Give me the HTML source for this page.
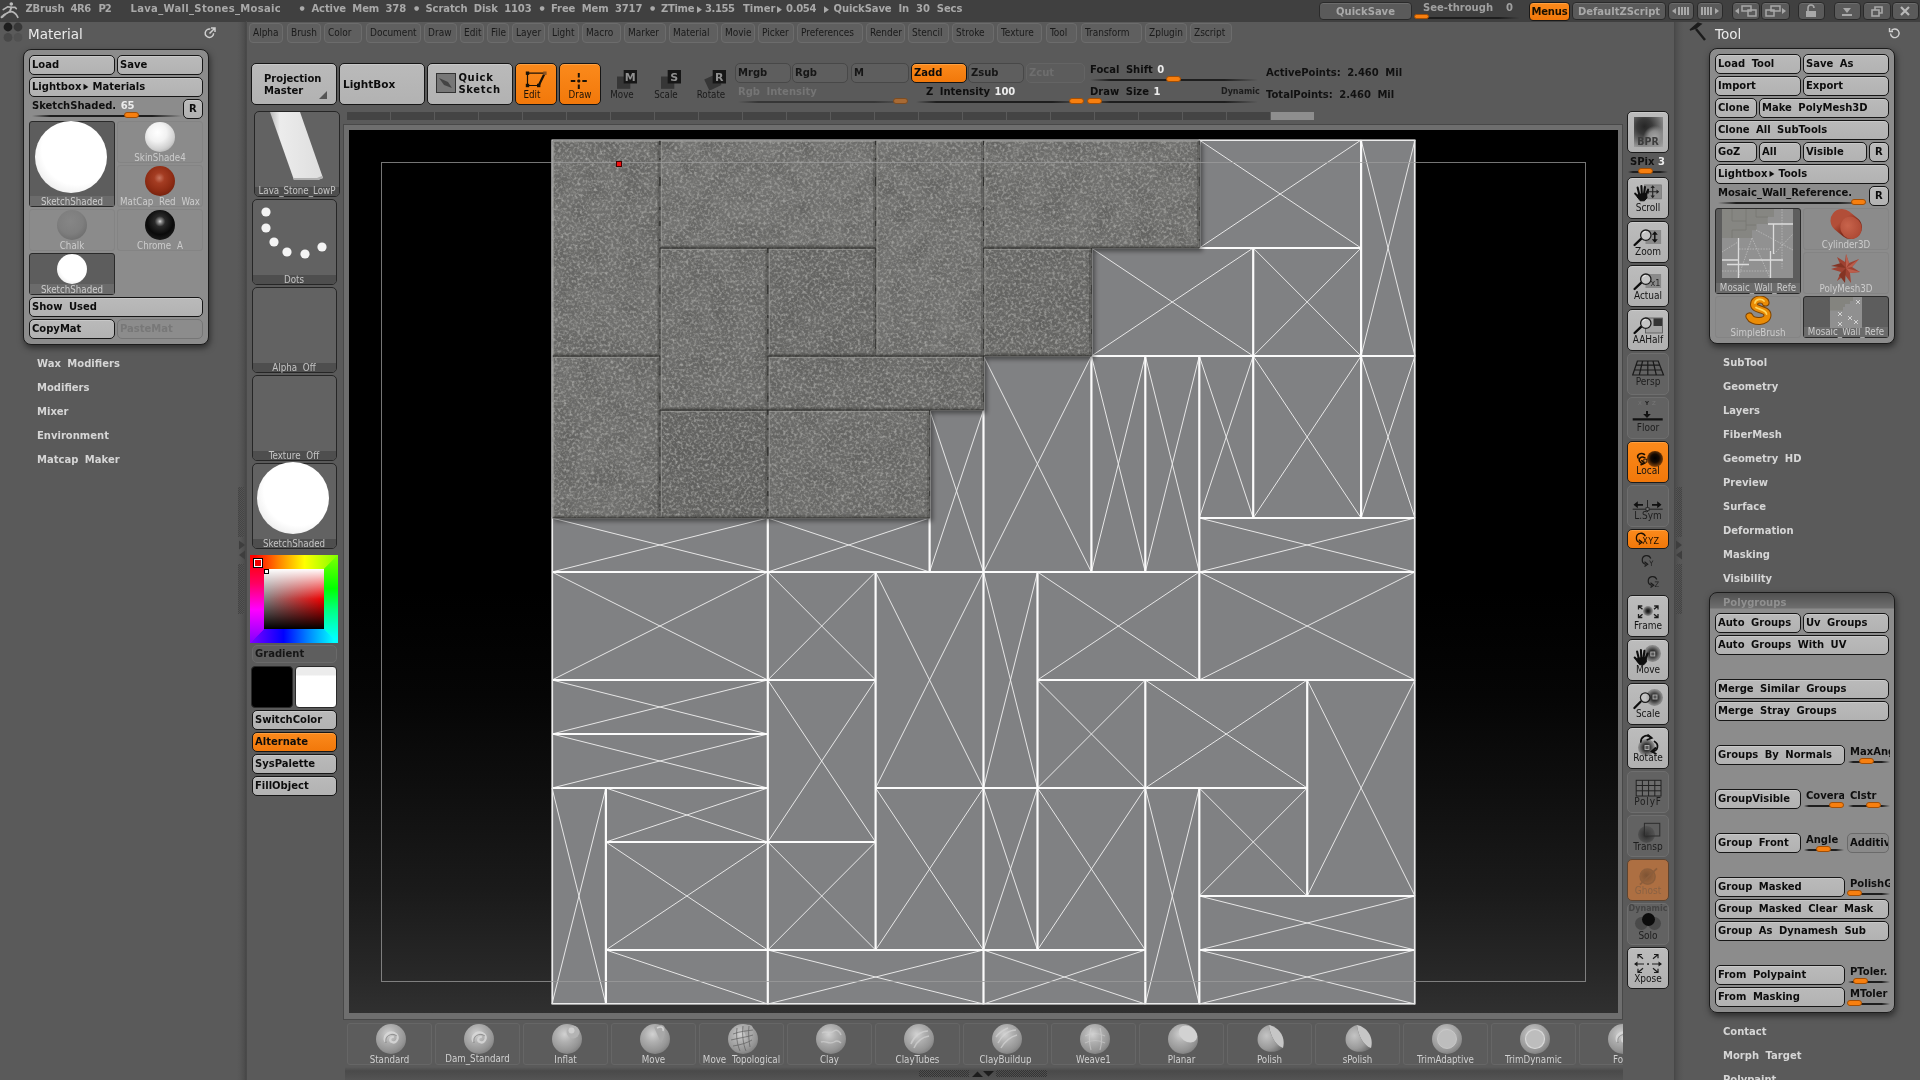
<!DOCTYPE html><html><head><meta charset="utf-8"><title>ZBrush</title><style>
*{box-sizing:border-box;margin:0;padding:0}
html,body{width:1920px;height:1080px;overflow:hidden;background:#5a5a5a}
body{position:relative;opacity:.999;font-family:"DejaVu Sans","Liberation Sans",sans-serif;font-size:10px;color:#111}
.a{position:absolute}
.bt{position:absolute;height:20px;line-height:17px;border:1px solid #161616;border-radius:5px;background:linear-gradient(#bababa,#b2b2b2);font-weight:bold;font-size:10px;padding-left:2px;word-spacing:3px;white-space:nowrap;overflow:hidden;color:#0c0c0c;box-shadow:inset 0 1px 0 #c8c8c8}
.bo{background:linear-gradient(#fb8a1c,#f2780a);box-shadow:inset 0 1px 0 #ffa040}
.bf{background:#5e5e5e;border-color:#484848;box-shadow:none;color:#161616}
.bd{background:#8c8c8c;border-color:#767676;box-shadow:none;color:#787878}
.pn{position:absolute;background:#8c8c8c;border:1px solid #1c1c1c;border-radius:8px;box-shadow:1px 3px 6px rgba(0,0,0,.5)}
.sub{position:absolute;font-weight:bold;font-size:10px;color:#d6d6d6;word-spacing:3px;white-space:nowrap;line-height:12px}
.tb{position:absolute;font-weight:bold;font-size:10px;color:#a9a9a9;word-spacing:3px;white-space:nowrap;line-height:14px;top:2px}
.mn{position:absolute;top:23px;height:20px;line-height:18px;border:1px solid #6c6c6c;border-radius:4px;background:#5f5f5f;font-family:"DejaVu Sans Condensed","Liberation Sans",sans-serif;font-size:10px;color:#1a1a1a;padding-left:3px;white-space:nowrap;overflow:hidden}
.th{position:absolute;background:#5d5d5d;border:1px solid #2a2a2a;border-radius:3px}
.thf{position:absolute;background:#8b8b8b;border:1px solid #848484;border-radius:3px}
.lb{position:absolute;left:0;right:0;bottom:-4px;height:17px;line-height:17px;overflow:hidden;clip-path:inset(0 0 3px 0);text-align:center;font-family:"DejaVu Sans Condensed","Liberation Sans",sans-serif;font-size:9.7px;color:#cccccc;white-space:nowrap;word-spacing:3px}
.sp{position:absolute;border-radius:50%}
.sl{position:absolute;height:1.5px;background:linear-gradient(90deg,rgba(30,30,30,0),#1e1e1e 12%,#1e1e1e 80%,rgba(30,30,30,0))}
.kn{position:absolute;height:6px;width:15px;border-radius:3px;background:#f77f0f;border:1px solid #a34f05}
.st{position:absolute;font-weight:bold;font-size:10px;color:#0e0e0e;word-spacing:3px;white-space:nowrap;line-height:14px}
.st b{color:#ececec;margin-left:-2px}
.ib{position:absolute;left:1627px;width:42px;height:42px;border:1px solid #1c1c1c;border-radius:5px;background:linear-gradient(#bcbcbc,#b0b0b0);box-shadow:inset 0 1px 0 #cacaca;overflow:hidden}
.ib.bo{background:linear-gradient(#fb8a1c,#f2780a);box-shadow:inset 0 1px 0 #ffa040}
.ibf{background:#626262;border-color:#6e6e6e;box-shadow:none}
.ib .lb,.ibf .lb{color:#141414;bottom:1px;font-size:10px}
.ibf .lb{color:#1d1d1d}
.br{position:absolute;top:1022px;width:85px;height:42px;border:1px solid #666;border-radius:3px;background:#5c5c5c}
.br .lb{bottom:-4px;color:#d0d0d0}
</style></head><body>
<div class="a" style="left:0;top:0;width:1920px;height:21.5px;background:#404040"></div>
<svg class="a" style="left:0;top:0" width="24" height="22" viewBox="0 0 24 22"><circle cx="11.300" cy="4" r="1.800" fill="#bcbcbc"/><g stroke="#b8b8b8" fill="none" stroke-linecap="round" stroke-linejoin="round"><path d="M3.200 9.600L7.600 6.800L11.500 7.400L14.800 7.200L16.300 8.600" stroke-width="1.600"/><path d="M11.300 7.400L9.900 11.600" stroke-width="1.800"/><path d="M9.900 11.600C7 13 4 15 1.500 17.300" stroke-width="1.700"/><path d="M9.900 11.800C13 11.300 16.600 13.500 17.800 17.300" stroke-width="1.700"/><ellipse cx="3.300" cy="15.800" rx="2.600" ry="1" transform="rotate(-38 3.300 15.800)" stroke-width=".8"/></g></svg>
<div class="tb" style="left:25.5px;letter-spacing:-.2px">ZBrush</div>
<div class="tb" style="left:70.5px;letter-spacing:-.5px">4R6</div>
<div class="tb" style="left:98.5px;letter-spacing:-1px">P2</div>
<div class="tb" style="left:130.5px;letter-spacing:.32px">Lava_Wall_Stones_Mosaic</div>
<div class="tb" style="left:299.59999999999997px;font-size:6px;line-height:14px;top:1px">&#9679;</div>
<div class="tb" style="left:414.0px;font-size:6px;line-height:14px;top:1px">&#9679;</div>
<div class="tb" style="left:539.6px;font-size:6px;line-height:14px;top:1px">&#9679;</div>
<div class="tb" style="left:649.9px;font-size:6px;line-height:14px;top:1px">&#9679;</div>
<div class="tb" style="left:311.5px;letter-spacing:-.12px">Active Mem 378</div>
<div class="tb" style="left:425.5px;letter-spacing:-.1px">Scratch Disk 1103</div>
<div class="tb" style="left:551px;letter-spacing:-.1px">Free Mem 3717</div>
<div class="tb" style="left:661px;letter-spacing:-.3px">ZTime</div>
<div class="tb" style="left:705px;letter-spacing:-.4px">3.155</div>
<div class="tb" style="left:743px;">Timer</div>
<div class="tb" style="left:786px;letter-spacing:-.3px">0.054</div>
<div class="tb" style="left:833.5px;letter-spacing:-.1px;word-spacing:3.6px">QuickSave In 30 Secs</div>
<div class="tb" style="left:696.6px;font-size:9px;line-height:14px;top:1.5px;transform:scaleX(.72);transform-origin:0 0">&#9654;</div>
<div class="tb" style="left:777.4px;font-size:9px;line-height:14px;top:1.5px;transform:scaleX(.72);transform-origin:0 0">&#9654;</div>
<div class="tb" style="left:824.3px;font-size:9px;line-height:14px;top:1.5px;transform:scaleX(.72);transform-origin:0 0">&#9654;</div>
<div class="a" style="left:1319px;top:2px;width:93px;height:18px;border:1px solid #2a2a2a;border-radius:4px;background:#5a5a5a;box-shadow:inset 0 1px 0 #6c6c6c;font-weight:bold;font-size:10px;line-height:17px;text-align:center;color:#a8a8a8;white-space:nowrap;overflow:hidden;">QuickSave</div>
<div class="tb" style="left:1423px;color:#a0a0a0;top:1px">See-through&nbsp; 0</div>
<div class="sl" style="left:1414px;top:17px;width:106px"></div><div class="kn" style="left:1414px;top:14px;height:5px"></div>
<div class="a" style="left:1529px;top:2px;width:41px;height:18px;border:1px solid #2a2a2a;border-radius:4px;background:#5a5a5a;box-shadow:inset 0 1px 0 #6c6c6c;font-weight:bold;font-size:10px;line-height:17px;text-align:center;color:#a8a8a8;white-space:nowrap;overflow:hidden;height:19px;font-size:10px;letter-spacing:-.2px;background:linear-gradient(#fb8a1c,#f2780a);color:#1a1000;box-shadow:inset 0 1px 0 #ffa040;border-color:#1a1a1a">Menus</div>
<div class="a" style="left:1572px;top:2px;width:94px;height:18px;border:1px solid #2a2a2a;border-radius:4px;background:#5a5a5a;box-shadow:inset 0 1px 0 #6c6c6c;font-weight:bold;font-size:10px;line-height:17px;text-align:center;color:#a8a8a8;white-space:nowrap;overflow:hidden;">DefaultZScript</div>
<div class="a" style="left:1668px;top:2px;width:26px;height:18px;border:1px solid #2a2a2a;border-radius:4px;background:#5a5a5a;box-shadow:inset 0 1px 0 #6c6c6c;font-weight:bold;font-size:10px;line-height:17px;text-align:center;color:#a8a8a8;white-space:nowrap;overflow:hidden;"></div>
<div class="a" style="left:1697px;top:2px;width:26px;height:18px;border:1px solid #2a2a2a;border-radius:4px;background:#5a5a5a;box-shadow:inset 0 1px 0 #6c6c6c;font-weight:bold;font-size:10px;line-height:17px;text-align:center;color:#a8a8a8;white-space:nowrap;overflow:hidden;"></div>
<div class="a" style="left:1732px;top:2px;width:28px;height:18px;border:1px solid #2a2a2a;border-radius:4px;background:#5a5a5a;box-shadow:inset 0 1px 0 #6c6c6c;font-weight:bold;font-size:10px;line-height:17px;text-align:center;color:#a8a8a8;white-space:nowrap;overflow:hidden;"></div>
<div class="a" style="left:1761px;top:2px;width:29px;height:18px;border:1px solid #2a2a2a;border-radius:4px;background:#5a5a5a;box-shadow:inset 0 1px 0 #6c6c6c;font-weight:bold;font-size:10px;line-height:17px;text-align:center;color:#a8a8a8;white-space:nowrap;overflow:hidden;"></div>
<div class="a" style="left:1798px;top:2px;width:27px;height:18px;border:1px solid #2a2a2a;border-radius:4px;background:#5a5a5a;box-shadow:inset 0 1px 0 #6c6c6c;font-weight:bold;font-size:10px;line-height:17px;text-align:center;color:#a8a8a8;white-space:nowrap;overflow:hidden;"></div>
<div class="a" style="left:1834px;top:2px;width:27px;height:18px;border:1px solid #2a2a2a;border-radius:4px;background:#5a5a5a;box-shadow:inset 0 1px 0 #6c6c6c;font-weight:bold;font-size:10px;line-height:17px;text-align:center;color:#a8a8a8;white-space:nowrap;overflow:hidden;"></div>
<div class="a" style="left:1863px;top:2px;width:28px;height:18px;border:1px solid #2a2a2a;border-radius:4px;background:#5a5a5a;box-shadow:inset 0 1px 0 #6c6c6c;font-weight:bold;font-size:10px;line-height:17px;text-align:center;color:#a8a8a8;white-space:nowrap;overflow:hidden;"></div>
<div class="a" style="left:1892px;top:2px;width:27px;height:18px;border:1px solid #2a2a2a;border-radius:4px;background:#5a5a5a;box-shadow:inset 0 1px 0 #6c6c6c;font-weight:bold;font-size:10px;line-height:17px;text-align:center;color:#a8a8a8;white-space:nowrap;overflow:hidden;"></div>
<svg class="a" style="left:1668px;top:2px" width="252" height="18" viewBox="0 0 252 18" fill="#a8a8a8" stroke="none"><path d="M4 9l4-3v6z"/><rect x="10" y="5" width="2" height="8"/><rect x="13" y="5" width="2" height="8"/><rect x="16" y="5" width="2" height="8"/><rect x="19" y="5" width="2" height="8"/><path d="M51 9l-4-3v6z"/><rect x="33" y="5" width="2" height="8"/><rect x="36" y="5" width="2" height="8"/><rect x="39" y="5" width="2" height="8"/><rect x="42" y="5" width="2" height="8"/><path d="M67 9l4-3v6z"/><g fill="none" stroke="#a8a8a8" stroke-width="1.5"><rect x="74" y="4" width="9" height="5"/><rect x="80" y="8" width="8" height="6"/></g><path d="M118 9l-4-3v6z"/><g fill="none" stroke="#a8a8a8" stroke-width="1.5"><rect x="98" y="8" width="8" height="6"/><rect x="103" y="4" width="9" height="5"/></g><rect x="138" y="9" width="10" height="6"/><path d="M140 9v-3a3 3 0 0 1 6 0" fill="none" stroke="#a8a8a8" stroke-width="1.6"/><path d="M175 6h8l-4 5z"/><rect x="174" y="12" width="10" height="2"/><g fill="none" stroke="#a8a8a8" stroke-width="1.6"><rect x="204" y="8" width="7" height="6"/><path d="M207 8v-3h7v6h-3"/></g><path d="M233 5l8 8m0-8l-8 8" stroke="#b8b8b8" stroke-width="2.2" fill="none"/></svg>
<div class="mn" style="left:249px;width:34px">Alpha</div>
<div class="mn" style="left:287px;width:34px">Brush</div>
<div class="mn" style="left:324px;width:38px">Color</div>
<div class="mn" style="left:366px;width:55px">Document</div>
<div class="mn" style="left:424px;width:33px">Draw</div>
<div class="mn" style="left:460px;width:24px">Edit</div>
<div class="mn" style="left:487px;width:22px">File</div>
<div class="mn" style="left:512px;width:33px">Layer</div>
<div class="mn" style="left:548px;width:31px">Light</div>
<div class="mn" style="left:582px;width:39px">Macro</div>
<div class="mn" style="left:624px;width:42px">Marker</div>
<div class="mn" style="left:669px;width:49px">Material</div>
<div class="mn" style="left:721px;width:34px">Movie</div>
<div class="mn" style="left:758px;width:36px">Picker</div>
<div class="mn" style="left:797px;width:66px">Preferences</div>
<div class="mn" style="left:866px;width:39px">Render</div>
<div class="mn" style="left:908px;width:41px">Stencil</div>
<div class="mn" style="left:952px;width:42px">Stroke</div>
<div class="mn" style="left:997px;width:45px">Texture</div>
<div class="mn" style="left:1046px;width:31px">Tool</div>
<div class="mn" style="left:1081px;width:61px">Transform</div>
<div class="mn" style="left:1145px;width:42px">Zplugin</div>
<div class="mn" style="left:1190px;width:42px">Zscript</div>
<div class="a" style="left:237px;top:21.500px;width:9px;height:1059px;background:linear-gradient(90deg,#5a5a5a,#565656 40%,#4e4e4e 80%,#464646)"></div>
<div class="a" style="left:238px;top:487px;width:6px;height:50px;background:#4c4c4c repeating-conic-gradient(#444 0 25%,#545454 0 50%) 0 0/2px 2px"></div>
<div class="a" style="left:238px;top:564px;width:6px;height:50px;background:#4c4c4c repeating-conic-gradient(#444 0 25%,#545454 0 50%) 0 0/2px 2px"></div>
<svg class="a" style="left:237.500px;top:539px" width="8" height="24"><path d="M1 1.500l6 4.500l-6 4.500z M7 11.500l-6 4.500l6 4.500z" fill="#3e3e3e"/></svg>
<svg class="a" style="left:2.400px;top:20.900px" width="22" height="22"><circle cx="6" cy="6" r="4.400" fill="#1e1e1e"/><circle cx="16" cy="6" r="4.400" fill="#383838"/><circle cx="6" cy="16.400" r="4.400" fill="#484848"/><circle cx="16" cy="16.400" r="4.400" fill="#515151"/></svg>
<div class="a" style="left:28px;top:25px;font-size:13.5px;line-height:18px;color:#eaeaea">Material</div>
<svg class="a" style="left:203px;top:26px" width="14" height="14" viewBox="0 0 14 14"><path d="M10.6 7.2a4.2 4.2 0 1 1-3.3-4.1" fill="none" stroke="#cfcfcf" stroke-width="1.5"/><path d="M6.5 7.5L11.5 2.5M8 2h4v4" fill="none" stroke="#cfcfcf" stroke-width="1.5"/></svg>
<div class="pn" style="left:23px;top:49px;width:186px;height:296px"></div>
<div class="bt " style="left:29px;top:55px;width:86px;">Load</div>
<div class="bt " style="left:117px;top:55px;width:86px;">Save</div>
<div class="bt " style="left:29px;top:77px;width:174px;">Lightbox<span style="font-size:8px;margin:0 3px 0 2px;display:inline-block;transform:scaleX(.8);position:relative;top:-1px">&#9654;</span>Materials</div>
<div class="st" style="left:32px;top:99px">SketchShaded. <b>65</b></div>
<div class="sl" style="left:32px;top:115px;width:150px"></div><div class="kn" style="left:124px;top:112px"></div>
<div class="bt " style="left:183px;top:99px;width:20px;padding-left:5px">R</div>
<div class="th" style="left:29px;top:121px;width:86px;height:86px"><div class="a" style="left:0;right:0;bottom:0;height:10px;background:#6b6b6b"></div><div class="lb" style="">SketchShaded</div></div>
<div class="sp" style="left:35px;top:121px;width:72px;height:72px;background:radial-gradient(circle at 58% 40%,#fff 0,#fff 58%,#f2f2f2 72%,#dcdcdc 86%,#b4b4b4 96%,#9a9a9a 100%)"></div>
<div class="thf" style="left:117px;top:121px;width:86px;height:42px"><div class="lb" style="">SkinShade4</div></div>
<div class="sp" style="left:145px;top:122px;width:30px;height:30px;background:radial-gradient(circle at 42% 35%,#fff 0,#f2f2f2 35%,#d0d0d0 65%,#8a8a8a 100%)"></div>
<div class="thf" style="left:117px;top:165px;width:86px;height:42px"><div class="lb" style="">MatCap Red Wax</div></div>
<div class="sp" style="left:145px;top:166px;width:30px;height:30px;background:radial-gradient(circle at 48% 40%,#c87660 0,#a43c22 22%,#8e2c14 55%,#5c1808 100%)"></div>
<div class="thf" style="left:29px;top:209px;width:86px;height:42px"><div class="lb" style="">Chalk</div></div>
<div class="sp" style="left:57px;top:210px;width:30px;height:30px;background:radial-gradient(circle at 45% 38%,#868686 0,#7e7e7e 50%,#6a6a6a 85%,#5e5e5e 100%)"></div>
<div class="thf" style="left:117px;top:209px;width:86px;height:42px"><div class="lb" style="">Chrome A</div></div>
<div class="sp" style="left:145px;top:210px;width:30px;height:30px;background:radial-gradient(circle at 50% 38%,#d8d8d8 0,#8a8a8a 8%,#2a2a2a 22%,#0a0a0a 55%,#1c1c1c 80%,#555 100%)"></div>
<div class="th" style="left:29px;top:253px;width:86px;height:42px"><div class="a" style="left:0;right:0;bottom:0;height:10px;background:#6b6b6b"></div><div class="lb" style="">SketchShaded</div></div>
<div class="sp" style="left:57px;top:254px;width:30px;height:30px;background:radial-gradient(circle at 58% 40%,#fff 0,#fff 58%,#f2f2f2 72%,#dcdcdc 86%,#b4b4b4 96%,#9a9a9a 100%)"></div>
<div class="bt " style="left:29px;top:297px;width:174px;">Show Used</div>
<div class="bt " style="left:29px;top:319px;width:86px;">CopyMat</div>
<div class="bt bd" style="left:117px;top:319px;width:86px;">PasteMat</div>
<div class="sub" style="left:37px;top:358px">Wax Modifiers</div>
<div class="sub" style="left:37px;top:382px">Modifiers</div>
<div class="sub" style="left:37px;top:406px">Mixer</div>
<div class="sub" style="left:37px;top:430px">Environment</div>
<div class="sub" style="left:37px;top:454px">Matcap Maker</div>
<div class="a" style="left:246px;top:21px;width:1px;height:1059px;background:#4a4a4a"></div>
<div class="bt " style="left:251px;top:63px;width:86px;height:42px;line-height:12px;"><div style="margin:9px 0 0 10px">Projection<br>Master</div><svg class="a" style="right:9px;bottom:5px" width="8" height="8"><path d="M8 0v8h-8z" fill="#555"/></svg></div>
<div class="bt " style="left:339px;top:63px;width:86px;height:42px;line-height:12px;"><div style="margin:14px 0 0 1px;font-size:10.5px">LightBox</div></div>
<div class="bt " style="left:427px;top:63px;width:86px;height:42px;line-height:12px;"><div class="a" style="left:8px;top:9px;width:20px;height:20px;background:#777;border:1px solid #333"></div><svg class="a" style="left:9px;top:10px" width="18" height="18"><path d="M2 4l9 4l4 6l-8-3z" fill="#444"/></svg><div style="margin:8px 0 0 21px;text-align:center;width:50px;letter-spacing:.7px">Quick<br>&nbsp;Sketch</div></div>
<div class="bt bo" style="left:515px;top:63px;width:42px;height:42px;line-height:12px;padding:0"><svg class="a" style="left:0;top:0" width="40" height="40" viewBox="0 0 40 40"><path d="M11.500 9.200H28.700L22.700 21.500H11.500Z" fill="none" stroke="#1a1208" stroke-width="1.200"/><path d="M28.700 9.200L22.700 21.500" stroke="#1a1208" stroke-width="2.200"/><rect x="9.800" y="7.500" width="3.400" height="3.400" fill="#1a1208"/><rect x="27.200" y="7.500" width="3.400" height="3.400" fill="#8a5220"/><rect x="9.800" y="19.800" width="3.400" height="3.400" fill="#1a1208"/><rect x="21" y="19.800" width="3.400" height="3.400" fill="#1a1208"/></svg><div class="lb" style="color:#1a1208;bottom:1px;left:-8px;font-family:'DejaVu Sans Condensed',sans-serif;font-weight:normal">Edit</div></div>
<div class="bt bo" style="left:559px;top:63px;width:42px;height:42px;line-height:12px;padding:0"><svg class="a" style="left:0;top:0" width="40" height="40" viewBox="0 0 40 40"><path d="M18.800 9v4.500M18.800 15.500v3M18.800 20.500v4.500M10.800 17h4.500M17.300 17h3M22.300 17h4.500" stroke="#1a1208" stroke-width="2" fill="none"/></svg><div class="lb" style="color:#1a1208;bottom:1px;font-family:'DejaVu Sans Condensed',sans-serif;font-weight:normal">Draw</div></div>
<svg class="a" style="left:611px;top:68px" width="30" height="22" viewBox="0 0 30 22"><g transform="rotate(0 12 14)"><rect x="6" y="8.500" width="13.300" height="12.300" fill="#363636"/></g><rect x="12.700" y="2" width="13.300" height="13.500" fill="#161616"/><text x="19.300" y="13" text-anchor="middle" font-family="DejaVu Sans" font-weight="bold" font-size="11" fill="#909090">M</text></svg>
<div class="lb" style="left:600px;width:44px;top:86px;color:#1a1a1a">Move</div>
<svg class="a" style="left:655px;top:68px" width="30" height="22" viewBox="0 0 30 22"><g transform="rotate(0 12 14)"><rect x="6" y="8.500" width="13.300" height="12.300" fill="#363636"/></g><rect x="12.700" y="2" width="13.300" height="13.500" fill="#161616"/><text x="19.300" y="13" text-anchor="middle" font-family="DejaVu Sans" font-weight="bold" font-size="11" fill="#909090">S</text></svg>
<div class="lb" style="left:644px;width:44px;top:86px;color:#1a1a1a">Scale</div>
<svg class="a" style="left:700px;top:68px" width="30" height="22" viewBox="0 0 30 22"><g transform="rotate(-25 12 14)"><rect x="6" y="8.500" width="13.300" height="12.300" fill="#363636"/></g><rect x="12.700" y="2" width="13.300" height="13.500" fill="#161616"/><text x="19.300" y="13" text-anchor="middle" font-family="DejaVu Sans" font-weight="bold" font-size="11" fill="#909090">R</text></svg>
<div class="lb" style="left:689px;width:44px;top:86px;color:#1a1a1a">Rotate</div>
<div class="bt bf" style="left:735px;top:63px;width:56px;height:20px">Mrgb</div>
<div class="bt bf" style="left:792px;top:63px;width:56px;height:20px">Rgb</div>
<div class="bt bf" style="left:851px;top:63px;width:58px;height:20px">M</div>
<div class="bt bo" style="left:911px;top:63px;width:56px;height:20px">Zadd</div>
<div class="bt bf" style="left:968px;top:63px;width:56px;height:20px">Zsub</div>
<div class="bt" style="left:1026px;top:63px;width:59px;height:20px;background:#5c5c5c;border-color:#646464;box-shadow:none;color:#6e6e6e">Zcut</div>
<div class="st" style="left:738px;top:85px;color:#757575">Rgb Intensity</div>
<div class="sl" style="left:738px;top:101px;width:170px;opacity:.6"></div><div class="kn" style="left:893px;top:98px;background:#a86a34;border-color:#7c4c22"></div>
<div class="st" style="left:926px;top:85px">Z Intensity <b>100</b></div>
<div class="sl" style="left:916px;top:101px;width:170px"></div><div class="kn" style="left:1069px;top:98px"></div>
<div class="st" style="left:1090px;top:63px">Focal Shift <b>0</b></div>
<div class="sl" style="left:1090px;top:79px;width:168px"></div><div class="kn" style="left:1166px;top:76px"></div>
<div class="st" style="left:1090px;top:85px">Draw Size <b>1</b></div>
<div class="sl" style="left:1090px;top:101px;width:168px"></div><div class="kn" style="left:1087px;top:98px"></div>
<div class="st" style="left:1221px;top:85px;font-size:8px;color:#1c1c1c">Dynamic</div>
<div class="st" style="left:1266px;top:66px;color:#111">ActivePoints: 2.460 Mil</div>
<div class="st" style="left:1266px;top:88px;color:#111">TotalPoints: 2.460 Mil</div>
<div class="th" style="left:254px;top:111px;width:86px;height:86px;background:#626262;border-color:#262626;border-radius:5px"><svg class="a" style="left:0;top:0" width="85" height="76"><defs><linearGradient id="lg1" x1="0" x2="1"><stop offset="0" stop-color="#b8b8b8"/><stop offset=".18" stop-color="#ececec"/><stop offset="1" stop-color="#dedede"/></linearGradient></defs><path d="M15 0h30l23 66l-5 2h-24z" fill="url(#lg1)"/><path d="M39 68h24l5-2l-1-2l-5 2h-24z" fill="#b0b0b0"/></svg><div class="a" style="left:0;right:0;bottom:0;height:9px;background:#4e4e4e;border-radius:0 0 4px 4px"></div><div class="lb" style="color:#c4c4c4;line-height:15px;clip-path:inset(0 0 2px 0)">Lava_Stone_LowP</div></div>
<div class="th" style="left:251.5px;top:199px;width:85px;height:86px;background:#626262;border-color:#262626;border-radius:5px"><svg class="a" style="left:0;top:0" width="85" height="76" fill="#f4f4f4"><circle cx="13" cy="12" r="4.6"/><circle cx="13" cy="28" r="4.6"/><circle cx="21" cy="42" r="4.6"/><circle cx="34" cy="52" r="4.6"/><circle cx="52" cy="54" r="4.6"/><circle cx="69" cy="47" r="4.6"/></svg><div class="a" style="left:0;right:0;bottom:0;height:9px;background:#4e4e4e;border-radius:0 0 4px 4px"></div><div class="lb" style="color:#c4c4c4;">Dots</div></div>
<div class="th" style="left:251.5px;top:287px;width:85px;height:86px;background:#626262;border-color:#262626;border-radius:5px"><div class="a" style="left:0;right:0;bottom:0;height:9px;background:#4e4e4e;border-radius:0 0 4px 4px"></div><div class="lb" style="color:#c4c4c4;">Alpha Off</div></div>
<div class="th" style="left:251.5px;top:375px;width:85px;height:86px;background:#626262;border-color:#262626;border-radius:5px"><div class="a" style="left:0;right:0;bottom:0;height:9px;background:#4e4e4e;border-radius:0 0 4px 4px"></div><div class="lb" style="color:#c4c4c4;">Texture Off</div></div>
<div class="th" style="left:251.5px;top:463px;width:85px;height:86px;background:#626262;border-color:#262626;border-radius:5px"><div class="a" style="left:0;right:0;bottom:0;height:9px;background:#4e4e4e;border-radius:0 0 4px 4px"></div><div class="lb" style="color:#c4c4c4;">SketchShaded</div></div>
<div class="sp" style="left:257px;top:462px;width:72px;height:72px;background:radial-gradient(circle at 58% 40%,#fff 0,#fff 58%,#f2f2f2 72%,#dcdcdc 86%,#b4b4b4 96%,#9a9a9a 100%)"></div>
<div class="a" style="left:250px;top:555px;width:88px;height:88px;background:conic-gradient(from -45deg at 50% 50%,#f00,#ff0 12.5%,#7f0 25%,#0f4 37%,#0ff 50%,#00f 62.5%,#a0f 75%,#f0a 87.5%,#f00)"></div>
<div class="a" style="left:250px;top:555px;width:88px;height:88px;background:linear-gradient(90deg,#f00 5%,#ff8000 32%,#ff0 62%,#80ff00 100%);clip-path:polygon(0 0,100% 0,84% 16%,16% 16%)"></div>
<div class="a" style="left:250px;top:555px;width:88px;height:88px;background:linear-gradient(#80ff00,#0f0 38%,#00ff80 62%,#0ff 95%);clip-path:polygon(100% 0,100% 100%,84% 84%,84% 16%)"></div>
<div class="a" style="left:250px;top:555px;width:88px;height:88px;background:linear-gradient(90deg,#8000ff,#00f 38%,#0080ff 65%,#0ff 95%);clip-path:polygon(0 100%,100% 100%,84% 84%,16% 84%)"></div>
<div class="a" style="left:250px;top:555px;width:88px;height:88px;background:linear-gradient(#f00 5%,#ff0060 32%,#f0f 62%,#8000ff 100%);clip-path:polygon(0 0,0 100%,16% 84%,16% 16%)"></div>
<div class="a" style="left:264px;top:569px;width:60px;height:60px;background:linear-gradient(#fff 0,rgba(255,255,255,0) 50%,rgba(0,0,0,0) 50%,#000 100%),linear-gradient(90deg,#808080,#f00000)"></div>
<div class="a" style="left:253.500px;top:558.500px;width:8px;height:8px;background:#f00000;border:1px solid #fff;outline:1px solid #000"></div>
<div class="a" style="left:264px;top:569px;width:5px;height:5px;background:#fff;border:1px solid #000"></div>
<div class="bt bf" style="left:252px;top:645px;width:85px;height:18px;line-height:15px;border-color:#6a6a6a;background:#5e5e5e">Gradient</div>
<div class="a" style="left:251px;top:666px;width:42px;height:42px;background:#000;border:1px solid #2a2a2a;border-radius:4px"></div>
<div class="a" style="left:295px;top:666px;width:42px;height:42px;background:linear-gradient(#ececec 0 8px,#fff 9px);border:1px solid #2a2a2a;border-radius:4px"></div>
<div class="bt " style="left:252px;top:710px;width:85px;">SwitchColor</div>
<div class="bt bo" style="left:252px;top:732px;width:85px;">Alternate</div>
<div class="bt " style="left:252px;top:754px;width:85px;">SysPalette</div>
<div class="bt " style="left:252px;top:776px;width:85px;">FillObject</div>
<div class="a" style="left:347px;top:112px;width:43px;height:8px;background:#444"></div>
<div class="a" style="left:391px;top:112px;width:43px;height:8px;background:#444"></div>
<div class="a" style="left:435px;top:112px;width:43px;height:8px;background:#444"></div>
<div class="a" style="left:479px;top:112px;width:43px;height:8px;background:#444"></div>
<div class="a" style="left:523px;top:112px;width:43px;height:8px;background:#444"></div>
<div class="a" style="left:567px;top:112px;width:43px;height:8px;background:#444"></div>
<div class="a" style="left:611px;top:112px;width:43px;height:8px;background:#444"></div>
<div class="a" style="left:655px;top:112px;width:43px;height:8px;background:#444"></div>
<div class="a" style="left:699px;top:112px;width:43px;height:8px;background:#444"></div>
<div class="a" style="left:743px;top:112px;width:43px;height:8px;background:#444"></div>
<div class="a" style="left:787px;top:112px;width:43px;height:8px;background:#444"></div>
<div class="a" style="left:831px;top:112px;width:43px;height:8px;background:#444"></div>
<div class="a" style="left:875px;top:112px;width:43px;height:8px;background:#444"></div>
<div class="a" style="left:919px;top:112px;width:43px;height:8px;background:#444"></div>
<div class="a" style="left:963px;top:112px;width:43px;height:8px;background:#444"></div>
<div class="a" style="left:1007px;top:112px;width:43px;height:8px;background:#444"></div>
<div class="a" style="left:1051px;top:112px;width:43px;height:8px;background:#444"></div>
<div class="a" style="left:1095px;top:112px;width:43px;height:8px;background:#444"></div>
<div class="a" style="left:1139px;top:112px;width:43px;height:8px;background:#444"></div>
<div class="a" style="left:1183px;top:112px;width:43px;height:8px;background:#444"></div>
<div class="a" style="left:1227px;top:112px;width:43px;height:8px;background:#444"></div>
<div class="a" style="left:1271px;top:112px;width:43px;height:8px;background:#8e8e8e"></div>
<div class="a" style="left:343px;top:124px;width:1280px;height:896px;background:#6e6e6e;border:1px solid #484848"></div>
<div class="a" style="left:349px;top:130px;width:1269px;height:883px;background:linear-gradient(#000 0,#000 52%,#050505 64%,#0e0e0e 74%,#1a1a1a 86%,#272727 95%,#303030 100%)"></div>
<svg class="a" style="left:0;top:0" width="1920" height="1080" viewBox="0 0 1920 1080"><defs><filter id="nz" x="0" y="0" width="100%" height="100%" color-interpolation-filters="sRGB"><feTurbulence type="fractalNoise" baseFrequency="0.36" numOctaves="2" seed="7" result="t"/><feColorMatrix in="t" type="matrix" values="0 0 0 0 0  0 0 0 0 0  0 0 0 0 0  2.2 0 0 0 -0.95" result="a"/><feFlood flood-color="#a6a6a3"/><feComposite in2="a" operator="in" result="lt"/><feTurbulence type="fractalNoise" baseFrequency="0.045" numOctaves="3" seed="3" result="t2"/><feColorMatrix in="t2" type="matrix" values="0 0 0 0 0  0 0 0 0 0  0 0 0 0 0  0 1.4 0 0 -0.55" result="b"/><feFlood flood-color="#5c5c5a"/><feComposite in2="b" operator="in" result="dk"/><feMerge result="m"><feMergeNode in="SourceGraphic"/><feMergeNode in="dk"/><feMergeNode in="lt"/></feMerge><feComposite in="m" in2="SourceAlpha" operator="in"/></filter><filter id="sh" x="-5%" y="-5%" width="115%" height="115%"><feGaussianBlur stdDeviation="2"/></filter></defs><rect x="552.0" y="140.0" width="863.0" height="864.0" fill="#808183"/><path d="M1199.3 140.0L1361.1 248.0M1361.1 140.0L1199.3 248.0M1361.1 140.0L1415.0 356.0M1415.0 140.0L1361.1 356.0M1091.4 248.0L1253.2 356.0M1253.2 248.0L1091.4 356.0M1253.2 248.0L1361.1 356.0M1361.1 248.0L1253.2 356.0M983.5 356.0L1091.4 572.0M1091.4 356.0L983.5 572.0M1091.4 356.0L1145.3 572.0M1145.3 356.0L1091.4 572.0M1145.3 356.0L1199.3 572.0M1199.3 356.0L1145.3 572.0M1199.3 356.0L1253.2 518.0M1253.2 356.0L1199.3 518.0M1253.2 356.0L1361.1 518.0M1361.1 356.0L1253.2 518.0M1361.1 356.0L1415.0 518.0M1415.0 356.0L1361.1 518.0M929.6 410.0L983.5 572.0M983.5 410.0L929.6 572.0M552.0 518.0L767.8 572.0M767.8 518.0L552.0 572.0M767.8 518.0L929.6 572.0M929.6 518.0L767.8 572.0M1199.3 518.0L1415.0 572.0M1415.0 518.0L1199.3 572.0M552.0 572.0L767.8 680.0M767.8 572.0L552.0 680.0M767.8 572.0L875.6 680.0M875.6 572.0L767.8 680.0M875.6 572.0L983.5 788.0M983.5 572.0L875.6 788.0M983.5 572.0L1037.5 788.0M1037.5 572.0L983.5 788.0M1037.5 572.0L1199.3 680.0M1199.3 572.0L1037.5 680.0M1199.3 572.0L1415.0 680.0M1415.0 572.0L1199.3 680.0M552.0 680.0L767.8 734.0M767.8 680.0L552.0 734.0M552.0 734.0L767.8 788.0M767.8 734.0L552.0 788.0M767.8 680.0L875.6 842.0M875.6 680.0L767.8 842.0M1037.5 680.0L1145.3 788.0M1145.3 680.0L1037.5 788.0M1145.3 680.0L1307.2 788.0M1307.2 680.0L1145.3 788.0M1307.2 680.0L1415.0 896.0M1415.0 680.0L1307.2 896.0M552.0 788.0L605.9 1004.0M605.9 788.0L552.0 1004.0M605.9 788.0L767.8 842.0M767.8 788.0L605.9 842.0M605.9 842.0L767.8 950.0M767.8 842.0L605.9 950.0M767.8 842.0L875.6 950.0M875.6 842.0L767.8 950.0M875.6 788.0L983.5 950.0M983.5 788.0L875.6 950.0M983.5 788.0L1037.5 950.0M1037.5 788.0L983.5 950.0M1037.5 788.0L1145.3 950.0M1145.3 788.0L1037.5 950.0M1145.3 788.0L1199.3 1004.0M1199.3 788.0L1145.3 1004.0M1199.3 788.0L1307.2 896.0M1307.2 788.0L1199.3 896.0M1199.3 896.0L1415.0 950.0M1415.0 896.0L1199.3 950.0M1199.3 950.0L1415.0 1004.0M1415.0 950.0L1199.3 1004.0M767.8 950.0L983.5 1004.0M983.5 950.0L767.8 1004.0M983.5 950.0L1145.3 1004.0M1145.3 950.0L983.5 1004.0M605.9 950.0L767.8 1004.0" stroke="#ececec" stroke-width="0.95" fill="none"/><clipPath id="mc"><rect x="551.7" y="139.7" width="863.6" height="864.6"/></clipPath><path d="M1199.3 140.0H1361.1V248.0H1199.3ZM1361.1 140.0H1415.0V356.0H1361.1ZM1091.4 248.0H1253.2V356.0H1091.4ZM1253.2 248.0H1361.1V356.0H1253.2ZM983.5 356.0H1091.4V572.0H983.5ZM1091.4 356.0H1145.3V572.0H1091.4ZM1145.3 356.0H1199.3V572.0H1145.3ZM1199.3 356.0H1253.2V518.0H1199.3ZM1253.2 356.0H1361.1V518.0H1253.2ZM1361.1 356.0H1415.0V518.0H1361.1ZM929.6 410.0H983.5V572.0H929.6ZM552.0 518.0H767.8V572.0H552.0ZM767.8 518.0H929.6V572.0H767.8ZM1199.3 518.0H1415.0V572.0H1199.3ZM552.0 572.0H767.8V680.0H552.0ZM767.8 572.0H875.6V680.0H767.8ZM875.6 572.0H983.5V788.0H875.6ZM983.5 572.0H1037.5V788.0H983.5ZM1037.5 572.0H1199.3V680.0H1037.5ZM1199.3 572.0H1415.0V680.0H1199.3ZM552.0 680.0H767.8V734.0H552.0ZM552.0 734.0H767.8V788.0H552.0ZM767.8 680.0H875.6V842.0H767.8ZM1037.5 680.0H1145.3V788.0H1037.5ZM1145.3 680.0H1307.2V788.0H1145.3ZM1307.2 680.0H1415.0V896.0H1307.2ZM552.0 788.0H605.9V1004.0H552.0ZM605.9 788.0H767.8V842.0H605.9ZM605.9 842.0H767.8V950.0H605.9ZM767.8 842.0H875.6V950.0H767.8ZM875.6 788.0H983.5V950.0H875.6ZM983.5 788.0H1037.5V950.0H983.5ZM1037.5 788.0H1145.3V950.0H1037.5ZM1145.3 788.0H1199.3V1004.0H1145.3ZM1199.3 788.0H1307.2V896.0H1199.3ZM1199.3 896.0H1415.0V950.0H1199.3ZM1199.3 950.0H1415.0V1004.0H1199.3ZM767.8 950.0H983.5V1004.0H767.8ZM983.5 950.0H1145.3V1004.0H983.5ZM605.9 950.0H767.8V1004.0H605.9Z" stroke="#fbfbfb" stroke-width="2.2" fill="none" clip-path="url(#mc)"/><path d="M555.0 143.0H663.4V359.5H555.0ZM662.9 143.0H879.1V251.5H662.9ZM878.6 143.0H987.0V359.5H878.6ZM986.5 143.0H1202.8V251.5H986.5ZM662.9 251.0H771.3V413.5H662.9ZM770.8 251.0H879.1V359.5H770.8ZM986.5 251.0H1094.9V359.5H986.5ZM555.0 359.0H663.4V521.5H555.0ZM770.8 359.0H987.0V413.5H770.8ZM662.9 413.0H771.3V521.5H662.9ZM770.8 413.0H933.1V521.5H770.8Z" fill="#000" opacity=".4" filter="url(#sh)"/><g filter="url(#nz)"><rect x="552.0" y="140.0" width="107.9" height="216.0" fill="#70706e"/><rect x="659.9" y="140.0" width="215.7" height="108.0" fill="#737371"/><rect x="875.6" y="140.0" width="107.9" height="216.0" fill="#727270"/><rect x="983.5" y="140.0" width="215.8" height="108.0" fill="#71716f"/><rect x="659.9" y="248.0" width="107.9" height="162.0" fill="#6e6e6c"/><rect x="767.8" y="248.0" width="107.8" height="108.0" fill="#6a6a68"/><rect x="983.5" y="248.0" width="107.9" height="108.0" fill="#696967"/><rect x="552.0" y="356.0" width="107.9" height="162.0" fill="#6f6f6d"/><rect x="767.8" y="356.0" width="215.7" height="54.0" fill="#6b6b69"/><rect x="659.9" y="410.0" width="107.9" height="108.0" fill="#646462"/><rect x="767.8" y="410.0" width="161.8" height="108.0" fill="#6d6d6b"/></g><path d="M553.5 354.5V141.5H658.4M661.4 246.5V141.5H874.1M877.1 354.5V141.5H982.0M985.0 246.5V141.5H1197.8M661.4 408.5V249.5H766.3M769.3 354.5V249.5H874.1M985.0 354.5V249.5H1089.9M553.5 516.5V357.5H658.4M769.3 408.5V357.5H982.0M661.4 516.5V411.5H766.3M769.3 516.5V411.5H928.1" stroke="#9c9c9a" stroke-width="1.2" fill="none" opacity=".6"/><path d="M553.5 354.4H658.3V141.5M661.4 246.4H874.0V141.5M877.1 354.4H981.9V141.5M985.0 246.4H1197.7V141.5M661.4 408.4H766.1999999999999V249.5M769.3 354.4H874.0V249.5M985.0 354.4H1089.8000000000002V249.5M553.5 516.4H658.3V357.5M769.3 408.4H981.9V357.5M661.4 516.4H766.1999999999999V411.5M769.3 516.4H928.0V411.5" stroke="#3c3c3a" stroke-width="1.6" fill="none" opacity=".4"/><path d="M552.0 140.0V356.0M659.9 140.0V356.0M659.9 140.0V248.0M875.6 140.0V248.0M875.6 140.0V356.0M983.5 140.0V356.0M983.5 140.0V248.0M1199.3 140.0V248.0M659.9 248.0V410.0M767.8 248.0V410.0M767.8 248.0V356.0M875.6 248.0V356.0M983.5 248.0V356.0M1091.4 248.0V356.0M552.0 356.0V518.0M659.9 356.0V518.0M767.8 356.0V410.0M983.5 356.0V410.0M659.9 410.0V518.0M767.8 410.0V518.0M767.8 410.0V518.0M929.6 410.0V518.0" stroke="#5a5a58" stroke-width="1.2" fill="none"/><path d="M552.0 140.0V356.0M659.9 140.0V356.0M659.9 140.0V248.0M875.6 140.0V248.0M875.6 140.0V356.0M983.5 140.0V356.0M983.5 140.0V248.0M1199.3 140.0V248.0M659.9 248.0V410.0M767.8 248.0V410.0M767.8 248.0V356.0M875.6 248.0V356.0M983.5 248.0V356.0M1091.4 248.0V356.0M552.0 356.0V518.0M659.9 356.0V518.0M767.8 356.0V410.0M983.5 356.0V410.0M659.9 410.0V518.0M767.8 410.0V518.0M767.8 410.0V518.0M929.6 410.0V518.0" stroke="#262624" stroke-width="1" fill="none" stroke-dasharray="5 13 2 17 9 21 3 11" opacity=".6"/><path d="M552.0 140.0H659.9M552.0 356.0H659.9M659.9 140.0H875.6M659.9 248.0H875.6M875.6 140.0H983.5M875.6 356.0H983.5M983.5 140.0H1199.3M983.5 248.0H1199.3M659.9 248.0H767.8M659.9 410.0H767.8M767.8 248.0H875.6M767.8 356.0H875.6M983.5 248.0H1091.4M983.5 356.0H1091.4M552.0 356.0H659.9M552.0 518.0H659.9M767.8 356.0H983.5M767.8 410.0H983.5M659.9 410.0H767.8M659.9 518.0H767.8M767.8 410.0H929.6M767.8 518.0H929.6" stroke="#222220" stroke-width="1.2" fill="none"/><rect x="552.0" y="140.0" width="863.0" height="864.0" fill="none" stroke="#dcdcdc" stroke-width="1"/><rect x="381.5" y="162.5" width="1204" height="819" fill="none" stroke="#9c9c9c" stroke-width="1" opacity=".75"/><rect x="616.5" y="161.5" width="5" height="5" fill="#f01010" stroke="#400" stroke-width="1"/></svg>
<div class="a" style="left:1674px;top:21.500px;width:10px;height:1059px;background:linear-gradient(90deg,#464646,#4e4e4e 20%,#565656 60%,#5a5a5a)"></div>
<div class="a" style="left:1676px;top:487px;width:6px;height:50px;background:#4c4c4c repeating-conic-gradient(#444 0 25%,#545454 0 50%) 0 0/2px 2px"></div>
<div class="a" style="left:1676px;top:564px;width:6px;height:50px;background:#4c4c4c repeating-conic-gradient(#444 0 25%,#545454 0 50%) 0 0/2px 2px"></div>
<svg class="a" style="left:1675px;top:539px" width="8" height="24"><path d="M1 1.500l6 4.500l-6 4.500z M7 11.500l-6 4.500l6 4.500z" fill="#3e3e3e"/></svg>
<div class="ib " style="top:111px;height:42px;"><div class="a" style="left:6px;top:5px;width:29px;height:30px;background:radial-gradient(circle at 72% 68%,#a6a6a6 0,#8c8c8c 22%,rgba(120,120,120,0) 40%),radial-gradient(circle at 36% 32%,#262626 0,#3a3a3a 28%,#6a6a6a 55%,#9a9a9a 80%,#a4a4a4 100%)"></div><div class="lb" style="bottom:2px;font-size:10.5px"><b style="color:#3c3c3c">BPR</b></div></div>
<div class="st" style="left:1630px;top:155px;color:#111;word-spacing:2px">SPix <b>3</b></div>
<div class="sl" style="left:1628px;top:171px;width:40px"></div><div class="kn" style="left:1638px;top:168px"></div>
<div class="ib " style="top:177px;height:42px;"><svg class="a" style="left:0;top:0" width="40" height="40" viewBox="0 0 40 40"><rect x="16.300" y="6.900" width="17" height="14" fill="#8c8c8c" stroke="#6a6a6a" stroke-width=".6"/><path d="M24.700 8.300v11M19.200 13.800h11" stroke="#222" stroke-width="1.100"/><path d="M24.700 7.300l-2.200 2.700h4.400zM24.700 20.300l-2.200-2.700h4.400zM18.200 13.800l2.700-2.200v4.400zM31.200 13.800l-2.700-2.200v4.400z" fill="#222"/><g transform="translate(6.2 6.8) scale(1)" fill="#0e0e0e" stroke="#0e0e0e" stroke-linecap="round" stroke-linejoin="round"><path d="M4 9.500L12.300 8.500L12.800 13L10.200 16H6L3.300 12.500Z" stroke-width="1"/><path d="M5 9.500L3.400 2.800M7.600 8.800L7.200 1.300M9.900 8.800L10.700 2.200M11.900 9.800L13.900 4.800M4.600 12.800L1 8.800" stroke-width="2.100" fill="none"/></g></svg><div class="lb" style="bottom:2px;">Scroll</div></div>
<div class="ib " style="top:221px;height:42px;"><svg class="a" style="left:0;top:0" width="40" height="40" viewBox="0 0 40 40"><rect x="17.500" y="8" width="15.600" height="14" fill="#8a8a8a"/><path d="M26.800 10.500v9" stroke="#111" stroke-width="1.500"/><path d="M26.800 9.200l-3 3.600h6zM26.800 20.800l-3-3.600h6z" fill="#111"/><path d="M6.600 23L13.300 16.700" stroke="#0c0c0c" stroke-width="2.400" stroke-linecap="round"/><circle cx="17.800" cy="13.200" r="5.200" fill="#c6c6c6" stroke="#1c1c1c" stroke-width="1.300"/><path d="M14.800 11.500a3.400 3.400 0 0 1 3-2" stroke="#eee" stroke-width="1" fill="none"/></svg><div class="lb" style="bottom:2px;">Zoom</div></div>
<div class="ib " style="top:265px;height:42px;"><svg class="a" style="left:0;top:0" width="40" height="40" viewBox="0 0 40 40"><rect x="17.500" y="8" width="15.600" height="14" fill="#8a8a8a"/><text x="27.500" y="19.500" font-size="9" font-family="DejaVu Sans Condensed" text-anchor="middle" fill="#2a2a2a">x1</text><path d="M6.600 23L13.300 16.700" stroke="#0c0c0c" stroke-width="2.400" stroke-linecap="round"/><circle cx="17.800" cy="13.200" r="5.200" fill="#c6c6c6" stroke="#1c1c1c" stroke-width="1.300"/><path d="M14.800 11.500a3.400 3.400 0 0 1 3-2" stroke="#eee" stroke-width="1" fill="none"/></svg><div class="lb" style="bottom:2px;">Actual</div></div>
<div class="ib " style="top:309px;height:42px;"><svg class="a" style="left:0;top:0" width="40" height="40" viewBox="0 0 40 40"><rect x="17.500" y="8" width="17" height="15" fill="#a4a4a4" stroke="#555" stroke-width=".8"/><rect x="25.500" y="8.400" width="8.600" height="7.600" fill="#343434"/><path d="M6.600 23L13.300 16.700" stroke="#0c0c0c" stroke-width="2.400" stroke-linecap="round"/><circle cx="17.800" cy="13.200" r="5.200" fill="#c6c6c6" stroke="#1c1c1c" stroke-width="1.300"/><path d="M14.800 11.500a3.400 3.400 0 0 1 3-2" stroke="#eee" stroke-width="1" fill="none"/></svg><div class="lb" style="bottom:2px;">AAHalf</div></div>
<div class="ib ibf" style="top:353px;height:42px;"><svg class="a" style="left:0;top:0" width="40" height="40" viewBox="0 0 40 40"><g fill="none" stroke="#1a1a1a" stroke-width="1.200"><path d="M9.400 7h20.800l5.300 14h-30.800zM8 11.200h24M6.300 16h27.200M19.800 7v14M14.600 7l-3.300 14M25 7l3.300 14"/></g></svg><div class="lb" style="bottom:4px;">Persp</div></div>
<div class="ib ibf" style="top:397px;height:42px;"><svg class="a" style="left:0;top:0" width="40" height="40" viewBox="0 0 40 40"><path d="M4.700 21.400h30" stroke="#111" stroke-width="2.200"/><path d="M19 13v4" stroke="#111" stroke-width="2"/><path d="M15.200 16l3.800 4l3.800-4z" fill="#111"/><text x="19" y="6.500" font-size="5.500" font-weight="bold" text-anchor="middle" fill="#1c1c1c" font-family="DejaVu Sans">Y</text><text x="12" y="6.500" font-size="5.500" text-anchor="middle" fill="#777" font-family="DejaVu Sans">X</text><text x="26" y="6.500" font-size="5.500" text-anchor="middle" fill="#777" font-family="DejaVu Sans">Z</text></svg><div class="lb" style="bottom:2px;">Floor</div></div>
<div class="ib bo" style="top:441px;height:42px;"><div class="a" style="left:19px;top:9px;width:16px;height:16px;border-radius:50%;background:radial-gradient(circle at 50% 45%,#000 0,#160a02 35%,#6e3808 65%,rgba(246,126,16,0) 100%)"></div><svg class="a" style="left:0;top:0" width="40" height="40" viewBox="0 0 40 40"><g fill="none" stroke="#1a0e02" stroke-width="1.500" stroke-linecap="round"><path d="M16.500 12.500c-4-2.500-8 .5-6.500 3.500M17 15.800c-4-2-7 .8-5.300 3.600c1 1.800 3 2.300 4.300 1.600"/><path d="M13.800 18.600l2.800 2.700l-3.600 1.500"/></g><rect x="15.800" y="17.200" width="3" height="3" fill="#d88a3a" stroke="#1a0e02" stroke-width=".8"/></svg><div class="lb" style="bottom:3px;">Local</div></div>
<div class="ib ibf" style="top:485px;height:42px;"><svg class="a" style="left:0;top:0" width="40" height="40" viewBox="0 0 40 40"><path d="M4.700 23.200h30" stroke="#222" stroke-width="1"/><path d="M19.500 14v12" stroke="#222" stroke-width="1"/><path d="M8 18.800h7M24 18.800h7" stroke="#111" stroke-width="1.800"/><path d="M5.500 18.800l4.300-3.500v7zM33.500 18.800l-4.300-3.500v7z" fill="#111"/><rect x="18" y="21.700" width="3" height="3" fill="#777" stroke="#222" stroke-width=".8"/></svg><div class="lb" style="bottom:2px;">L.Sym</div></div>
<div class="ib bo" style="top:529px;height:20px"><svg class="a" style="left:0;top:0" width="40" height="18"><g fill="none" stroke="#1a0e02" stroke-width="1.300"><path d="M17.3 6.3A4.6 4.6 0 1 0 12.2 12.4"/><path d="M10.8 9.7L14.0 12.2L10.8 14.5"/></g><text x="14.300" y="14" font-family="DejaVu Sans Condensed" font-size="9" fill="#1a0e02" letter-spacing=".3">XYZ</text></svg></div>
<svg class="a" style="left:1640px;top:553px" width="30" height="40"><g fill="none" stroke="#1c1c1c" stroke-width="1.200"><path d="M10.8 5.5A4.4 4.4 0 1 0 5.9 11.3"/><path d="M4.5 8.8L7.7 11.3L4.5 13.6"/><path d="M16.8 26.5A4.4 4.4 0 1 0 11.9 32.3"/><path d="M10.5 29.8L13.7 32.3L10.5 34.6"/></g><text x="9.300" y="13.200" font-size="7.500" fill="#1c1c1c" font-family="DejaVu Sans Condensed">Y</text><text x="14.600" y="34.200" font-size="7.500" fill="#1c1c1c" font-family="DejaVu Sans Condensed">Z</text></svg>
<div class="ib " style="top:595px;height:42px;"><div class="a" style="left:15.2px;top:10.3px;width:10px;height:10px;border-radius:50%;background:radial-gradient(circle,rgba(0,0,0,.92) 0,rgba(0,0,0,.7) 30%,rgba(0,0,0,.3) 60%,rgba(0,0,0,0) 100%)"></div><svg class="a" style="left:0;top:0" width="40" height="40" viewBox="0 0 40 40"><g fill="none" stroke="#1c1c1c" stroke-width="1.300"><path d="M10.500 10l4 3.300M10.500 13.500v-3.500h3.800M30 10l-4 3.300M30 13.500v-3.500h-3.800M10.500 21.500l4-3.300M10.500 18v3.500h3.800M30 21.500l-4-3.300M30 18v3.500h-3.800"/></g></svg><div class="lb" style="bottom:2px;">Frame</div></div>
<div class="ib " style="top:639px;height:42px;"><div class="a" style="left:15.899999999999999px;top:5.199999999999999px;width:17.0px;height:17.0px;border-radius:50%;background:radial-gradient(circle,rgba(0,0,0,.92) 0,rgba(0,0,0,.7) 30%,rgba(0,0,0,.3) 60%,rgba(0,0,0,0) 100%)"></div><svg class="a" style="left:0;top:0" width="40" height="40" viewBox="0 0 40 40"><rect x="22.800" y="12" width="4" height="4" fill="#555" stroke="#b4b4b4" stroke-width=".9"/><g transform="translate(5.7 8.7) scale(1)" fill="#0e0e0e" stroke="#0e0e0e" stroke-linecap="round" stroke-linejoin="round"><path d="M4 9.500L12.300 8.500L12.800 13L10.200 16H6L3.300 12.500Z" stroke-width="1"/><path d="M5 9.500L3.400 2.800M7.600 8.800L7.200 1.300M9.900 8.800L10.700 2.200M11.900 9.800L13.900 4.800M4.600 12.800L1 8.800" stroke-width="2.100" fill="none"/></g></svg><div class="lb" style="bottom:2px;">Move</div></div>
<div class="ib " style="top:683px;height:42px;"><div class="a" style="left:18.2px;top:4.5px;width:17.0px;height:17.0px;border-radius:50%;background:radial-gradient(circle,rgba(0,0,0,.92) 0,rgba(0,0,0,.7) 30%,rgba(0,0,0,.3) 60%,rgba(0,0,0,0) 100%)"></div><svg class="a" style="left:0;top:0" width="40" height="40" viewBox="0 0 40 40"><rect x="25" y="11" width="4" height="4" fill="#555" stroke="#b4b4b4" stroke-width=".9"/><path d="M6.400 24L12.600 17.800" stroke="#0c0c0c" stroke-width="2.300" stroke-linecap="round"/><circle cx="17.200" cy="13.600" r="4.800" fill="rgba(200,200,200,.75)" stroke="#1c1c1c" stroke-width="1.200"/></svg><div class="lb" style="bottom:2px;">Scale</div></div>
<div class="ib " style="top:727px;height:42px;"><div class="a" style="left:10.100000000000001px;top:10.899999999999999px;width:17.0px;height:17.0px;border-radius:50%;background:radial-gradient(circle,rgba(0,0,0,.92) 0,rgba(0,0,0,.7) 30%,rgba(0,0,0,.3) 60%,rgba(0,0,0,0) 100%)"></div><svg class="a" style="left:0;top:0" width="40" height="40" viewBox="0 0 40 40"><g fill="none" stroke="#0e0e0e" stroke-width="1.700" stroke-linecap="round"><path d="M12.800 14c0-5 5-8.500 10-4.500"/><path d="M20 7l3.800 3l-4.500 1.800"/><path d="M26.500 13.500c5 3 3.500 9.500-2.500 10"/><path d="M27.500 20l-4 3.500l4.500 2.200"/></g><rect x="17" y="17.500" width="4" height="4" fill="#555" stroke="#b4b4b4" stroke-width=".9"/></svg><div class="lb" style="bottom:2px;">Rotate</div></div>
<div class="ib ibf" style="top:771px;height:42px;"><svg class="a" style="left:0;top:0" width="40" height="40" viewBox="0 0 40 40"><rect x="8.200" y="8.300" width="24.800" height="15.700" fill="#6c6c6c" stroke="#222" stroke-width="1"/><path d="M8.200 13.500h24.800M8.200 18.800h24.800M14.400 8.300v15.700M20.600 8.300v15.700M26.800 8.300v15.700" stroke="#222" stroke-width="1" fill="none"/></svg><div class="lb" style="bottom:2px;letter-spacing:.8px">PolyF</div></div>
<div class="ib ibf" style="top:815px;height:42px;"><div class="a" style="left:10px;top:10px;width:17px;height:17px;border-radius:50%;background:radial-gradient(circle,rgba(30,30,30,.9) 0,rgba(40,40,40,.6) 40%,rgba(60,60,60,0) 100%)"></div><svg class="a" style="left:0;top:0" width="40" height="40" viewBox="0 0 40 40"><rect x="16.400" y="7.300" width="15.400" height="12.700" fill="rgba(90,90,90,.35)" stroke="#2c2c2c" stroke-width="1"/></svg><div class="lb" style="bottom:1px;">Transp</div></div>
<div class="ib gh" style="top:859px;height:42px;background:#ad6f42;border-color:#5e4430;box-shadow:none"><div class="a" style="left:12px;top:9px;width:16px;height:16px;border-radius:50%;background:radial-gradient(circle at 40% 40%,rgba(120,80,50,.9) 0,rgba(140,92,56,.6) 60%,rgba(160,100,60,0) 100%)"></div><svg class="a" style="left:0;top:0" width="40" height="40" viewBox="0 0 40 40"><circle cx="19.500" cy="16.500" r="7.600" fill="none" stroke="#8c5e3c" stroke-width="1.200"/><path d="M12 24.600L29 8.300" stroke="#8c5e3c" stroke-width="1.600"/></svg><div class="lb" style="bottom:1px;">Ghost</div></div>
<style>.ib.gh .lb{color:#8a6244}</style>
<div class="ib ibf" style="top:903px;height:42px;"><div class="a" style="left:0;right:0;top:-1px;text-align:center;font-weight:bold;font-size:8px;line-height:11px;color:#454545">Dynamic</div><div class="a" style="left:6.500px;top:13px;width:13px;height:13px;border-radius:50%;background:#4a4a4a"></div><div class="a" style="left:20px;top:13px;width:13px;height:13px;border-radius:50%;background:#4a4a4a"></div><div class="a" style="left:13.500px;top:9px;width:13px;height:13px;border-radius:50%;background:#0c0c0c"></div><div class="lb" style="bottom:0px;">Solo</div></div>
<div class="ib " style="top:947px;height:42px;"><svg class="a" style="left:0;top:0" width="40" height="40" viewBox="0 0 40 40"><g fill="none" stroke="#1c1c1c" stroke-width="1.200"><path d="M10 6.500l5 4.200M10 10.200v-3.700h4M30 6.500l-5 4.200M30 10.200v-3.700h-4M10 24.500l5-4.200M10 20.800v3.700h4M30 24.500l-5-4.200M30 20.800v3.700h-4M7 16h9M33 16h-9"/></g><path d="M6 16l3.500-2.600v5.200zM34 16l-3.500-2.600v5.200z" fill="#1c1c1c"/><rect x="19.200" y="15.200" width="1.700" height="1.700" fill="#1c1c1c"/></svg><div class="lb" style="bottom:1px;">Xpose</div></div>
<svg class="a" style="left:1688px;top:21px" width="22" height="22"><path d="M8 8L17 19" stroke="#1c1c1c" stroke-width="2.4"/><path d="M2 9L10 2l3 1l-5 4z" fill="#1c1c1c" stroke="#1c1c1c" stroke-width="1.5"/></svg>
<div class="a" style="left:1715px;top:25px;font-size:13.5px;line-height:18px;color:#eaeaea">Tool</div>
<svg class="a" style="left:1888px;top:26px" width="14" height="14" viewBox="0 0 14 14"><path d="M3.500 4.500a4.300 4.300 0 1 1-1 3" fill="none" stroke="#cfcfcf" stroke-width="1.4"/><path d="M1.500 2v3.500h3.500" fill="none" stroke="#cfcfcf" stroke-width="1.4"/></svg>
<div class="pn" style="left:1709px;top:48px;width:186px;height:296px"></div>
<div class="bt " style="left:1715px;top:54px;width:86px;">Load Tool</div>
<div class="bt " style="left:1803px;top:54px;width:86px;">Save As</div>
<div class="bt " style="left:1715px;top:76px;width:86px;">Import</div>
<div class="bt " style="left:1803px;top:76px;width:86px;">Export</div>
<div class="bt " style="left:1715px;top:98px;width:42px;">Clone</div>
<div class="bt " style="left:1759px;top:98px;width:130px;">Make PolyMesh3D</div>
<div class="bt " style="left:1715px;top:120px;width:174px;">Clone All SubTools</div>
<div class="bt " style="left:1715px;top:142px;width:42px;">GoZ</div>
<div class="bt " style="left:1759px;top:142px;width:42px;">All</div>
<div class="bt " style="left:1803px;top:142px;width:64px;">Visible</div>
<div class="bt " style="left:1869px;top:142px;width:20px;padding-left:5px">R</div>
<div class="bt " style="left:1715px;top:164px;width:174px;">Lightbox<span style="font-size:8px;margin:0 3px 0 2px;display:inline-block;transform:scaleX(.8);position:relative;top:-1px">&#9654;</span>Tools</div>
<div class="st" style="left:1718px;top:186px">Mosaic_Wall_Reference.</div>
<div class="sl" style="left:1718px;top:202px;width:150px"></div><div class="kn" style="left:1851px;top:199px"></div>
<div class="bt " style="left:1869px;top:186px;width:20px;padding-left:5px">R</div>
<div class="th" style="left:1715px;top:208px;width:86px;height:86px"><div class="a" style="left:0;right:0;bottom:0;height:10px;background:#6b6b6b"></div><div class="lb" style=";line-height:15px;clip-path:inset(0 0 2px 0)">Mosaic_Wall_Refe</div></div>
<svg class="a" style="left:1722px;top:209px" width="71" height="69" viewBox="0 0 71 69"><rect width="71" height="69" fill="#919191"/><path d="M0 0h52v8h-6.300v7h-11v6.300h-4.700v7.700h-30z" fill="#868682"/><path d="M10 0v12h14v-12M24 12v9h-14v8M34 0v8h12M24 16h10" stroke="#767672" stroke-width=".8" fill="none"/><g stroke="#e4e4e4" fill="none"><path d="M51.500 15v30M16.500 29v40M48.500 42v27M0 51h17M27 51h34M5 55.500h22M46 15h25" stroke-width="1.300" opacity=".9"/><path d="M0 43l16 -10M16 69l14-40M30 29l18 40M52 45l19-20M34 21l37 20M0 62h48M60 0v60M17 40h31" stroke-width=".7" stroke-dasharray="1.500 1.200" opacity=".6"/></g></svg>
<div class="thf" style="left:1803px;top:208px;width:86px;height:42px"><div class="lb" style="">Cylinder3D</div></div>
<svg class="a" style="left:1826px;top:208px" width="40" height="34"><defs><linearGradient id="cy" x1="0" y1="0" x2="1" y2="1"><stop offset="0" stop-color="#b24e38"/><stop offset=".5" stop-color="#9a3a26"/><stop offset="1" stop-color="#7c2a1a"/></linearGradient><radialGradient id="cf" cx=".4" cy=".35" r=".8"><stop offset="0" stop-color="#c8644c"/><stop offset="1" stop-color="#a84430"/></radialGradient></defs><path d="M16 12.500L24.500 19.500" stroke="url(#cy)" stroke-width="23" stroke-linecap="round"/><ellipse cx="25" cy="19.800" rx="10.500" ry="11.300" fill="url(#cf)" transform="rotate(-25 25 19.800)"/></svg>
<div class="thf" style="left:1803px;top:252px;width:86px;height:42px"><div class="lb" style="">PolyMesh3D</div></div>
<svg class="a" style="left:1831px;top:253px" width="30" height="30" viewBox="-15 -15 30 30"><path d="M0-14l3 9l10-4l-7 8l8 5l-10 1l1 10l-6-8l-8 6l4-9l-10-3l10-3l-4-9l8 5z" fill="#9e4232"/><path d="M0-14l3 9l-3 5zM13-9l-7 8l-6 1zM14 4l-10 1l-4-5z" fill="#bc5e4c"/><path d="M0 0l-1 15l-6-8zM0 0l-15 -2l10-3z" fill="#843424"/></svg>
<div class="thf" style="left:1715px;top:296px;width:86px;height:42px"><div class="lb" style="">SimpleBrush</div></div>
<svg class="a" style="left:1743px;top:296px" width="30" height="30"><g fill="none" stroke-linecap="round"><path d="M22.500 6.500c-1-4-11.500-4.500-11.500 2c0 6 13.500 4 13.500 10.500c0 7.500-15 8-18 1.500" stroke="#7c4200" stroke-width="8"/><path d="M22.500 6.500c-1-4-11.500-4.500-11.500 2c0 6 13.500 4 13.500 10.500c0 7.500-15 8-18 1.500" stroke="#ea8c06" stroke-width="6"/><path d="M21 5c-2-2.500-8.500-2.500-9 2M13 11.500c3 2 10 2.500 10.500 6.500" stroke="#ffd45a" stroke-width="1.800"/></g></svg>
<div class="th" style="left:1803px;top:296px;width:86px;height:42px"><div class="a" style="left:0;right:0;bottom:0;height:10px;background:#6b6b6b"></div><div class="lb" style=";line-height:15px;clip-path:inset(0 0 2px 0)">Mosaic_Wall_Refe</div></div>
<svg class="a" style="left:1830px;top:297px" width="32" height="31"><rect width="32" height="31" fill="#909090"/><path d="M0 0h23v4h-3v3h-5v3h-2v3.500h-13z" fill="#84847f"/><g stroke="#e6e6e6" stroke-width=".9" opacity=".85"><path d="M8 15l4 4m0-4l-4 4M18 19l4 4m0-4l-4 4M26 3l4 4m0-4l-4 4M8 25l4 4m0-4l-4 4M24 23l4 4m0-4l-4 4"/></g></svg>
<div class="sub" style="left:1723px;top:357px">SubTool</div>
<div class="sub" style="left:1723px;top:381px">Geometry</div>
<div class="sub" style="left:1723px;top:405px">Layers</div>
<div class="sub" style="left:1723px;top:429px">FiberMesh</div>
<div class="sub" style="left:1723px;top:453px">Geometry HD</div>
<div class="sub" style="left:1723px;top:477px">Preview</div>
<div class="sub" style="left:1723px;top:501px">Surface</div>
<div class="sub" style="left:1723px;top:525px">Deformation</div>
<div class="sub" style="left:1723px;top:549px">Masking</div>
<div class="sub" style="left:1723px;top:573px">Visibility</div>
<div class="pn" style="left:1709px;top:592px;width:186px;height:421px;background:linear-gradient(#505050 0,#6e6e6e 15px,#8c8c8c 16px)"></div>
<div class="sub" style="left:1723px;top:597px;color:#909090">Polygroups</div>
<div class="bt " style="left:1715px;top:613px;width:86px;">Auto Groups</div>
<div class="bt " style="left:1803px;top:613px;width:86px;">Uv Groups</div>
<div class="bt " style="left:1715px;top:635px;width:174px;">Auto Groups With UV</div>
<div class="bt " style="left:1715px;top:679px;width:174px;">Merge Similar Groups</div>
<div class="bt " style="left:1715px;top:701px;width:174px;">Merge Stray Groups</div>
<div class="bt " style="left:1715px;top:745px;width:130px;">Groups By Normals</div>
<div class="st" style="left:1850px;top:745px;width:40px;overflow:hidden">MaxAngle</div>
<div class="sl" style="left:1848px;top:761px;width:42px"></div><div class="kn" style="left:1859px;top:758px"></div>
<div class="bt " style="left:1715px;top:789px;width:86px;">GroupVisible</div>
<div class="st" style="left:1806px;top:789px;width:38px;overflow:hidden">Coverage</div>
<div class="sl" style="left:1804px;top:805px;width:40px"></div><div class="kn" style="left:1829px;top:802px"></div>
<div class="st" style="left:1850px;top:789px;width:40px;overflow:hidden">Clstr</div>
<div class="sl" style="left:1848px;top:805px;width:42px"></div><div class="kn" style="left:1866px;top:802px"></div>
<div class="bt " style="left:1715px;top:833px;width:86px;">Group Front</div>
<div class="st" style="left:1806px;top:833px;width:38px;overflow:hidden">Angle</div>
<div class="sl" style="left:1804px;top:849px;width:40px"></div><div class="kn" style="left:1816px;top:846px"></div>
<div class="bt" style="left:1847px;top:833px;width:42px;background:#8a8a8a;border-color:#6a6a6a;box-shadow:none">Additive</div>
<div class="bt " style="left:1715px;top:877px;width:130px;">Group Masked</div>
<div class="st" style="left:1850px;top:877px;width:40px;overflow:hidden">PolishGroups</div>
<div class="sl" style="left:1848px;top:893px;width:42px"></div><div class="kn" style="left:1847px;top:890px"></div>
<div class="bt " style="left:1715px;top:899px;width:174px;">Group Masked Clear Mask</div>
<div class="bt " style="left:1715px;top:921px;width:174px;">Group As Dynamesh Sub</div>
<div class="bt " style="left:1715px;top:965px;width:130px;">From Polypaint</div>
<div class="st" style="left:1850px;top:965px;width:40px;overflow:hidden">PToler.</div>
<div class="sl" style="left:1848px;top:981px;width:42px"></div><div class="kn" style="left:1853px;top:978px"></div>
<div class="bt " style="left:1715px;top:987px;width:130px;">From Masking</div>
<div class="st" style="left:1850px;top:987px;width:40px;overflow:hidden">MToler</div>
<div class="sl" style="left:1848px;top:1003px;width:42px"></div><div class="kn" style="left:1847px;top:1000px"></div>
<div class="sub" style="left:1723px;top:1026px">Contact</div>
<div class="sub" style="left:1723px;top:1050px">Morph Target</div>
<div class="sub" style="left:1723px;top:1074px">Polypaint</div>
<div class="a" style="left:345px;top:1020px;width:1278px;height:48px;overflow:hidden">
<div class="br" style="left:2px;top:3px"><div class="sp" style="left:28px;top:0px;width:30px;height:30px;background:radial-gradient(circle at 42% 34%,#d2d2d2 0,#b0b0b0 30%,#959595 62%,#626262 100%)"></div><svg class="a" style="left:28px;top:0;overflow:visible" width="30" height="30"><path d="M9 17c-2-7 6-11 11-7c4 4 0 10-4 8c-3-1-2-5 1-5" fill="none" stroke="#d8d8d8" stroke-width="2.200" stroke-linecap="round" opacity=".85"/><path d="M10 19c-2-7 6-11 11-7" fill="none" stroke="#707070" stroke-width="1" opacity=".6"/></svg><div class="lb" style="">Standard</div></div>
<div class="br" style="left:90px;top:3px"><div class="sp" style="left:28px;top:0px;width:30px;height:30px;background:radial-gradient(circle at 42% 34%,#d2d2d2 0,#b0b0b0 30%,#959595 62%,#626262 100%)"></div><svg class="a" style="left:28px;top:0;overflow:visible" width="30" height="30"><path d="M9 17c-2-7 6-11 11-7c4 4 0 10-4 8c-3-1-2-5 1-5" fill="none" stroke="#d8d8d8" stroke-width="2.200" stroke-linecap="round" opacity=".85"/><path d="M10 19c-2-7 6-11 11-7" fill="none" stroke="#707070" stroke-width="1" opacity=".6"/></svg><div class="lb" style="line-height:15px;clip-path:inset(0 0 2px 0)">Dam_Standard</div></div>
<div class="br" style="left:178px;top:3px"><div class="sp" style="left:28px;top:0px;width:30px;height:30px;background:radial-gradient(circle at 42% 34%,#d2d2d2 0,#b0b0b0 30%,#959595 62%,#626262 100%)"></div><svg class="a" style="left:28px;top:0;overflow:visible" width="30" height="30"><circle cx="21" cy="8" r="6.500" fill="#b4b4b4"/><circle cx="19.500" cy="6.500" r="3" fill="#d6d6d6" opacity=".8"/></svg><div class="lb" style="">Inflat</div></div>
<div class="br" style="left:266px;top:3px"><div class="sp" style="left:28px;top:0px;width:30px;height:30px;background:radial-gradient(circle at 42% 34%,#d2d2d2 0,#b0b0b0 30%,#959595 62%,#626262 100%)"></div><svg class="a" style="left:28px;top:0;overflow:visible" width="30" height="30"><path d="M14 3c6-4 12-3 11 4c0 5-2 9-4 12z" fill="#a8a8a8"/><path d="M17 4c4-2 7-1 6 3" stroke="#dcdcdc" stroke-width="1.500" fill="none" opacity=".8"/></svg><div class="lb" style="">Move</div></div>
<div class="br" style="left:354px;top:3px"><div class="sp" style="left:28px;top:0px;width:30px;height:30px;background:radial-gradient(circle at 42% 34%,#d2d2d2 0,#b0b0b0 30%,#959595 62%,#626262 100%)"></div><svg class="a" style="left:28px;top:0;overflow:visible" width="30" height="30"><path d="M14 3c6-4 12-3 11 4c0 5-2 9-4 12z" fill="#a8a8a8"/><path d="M5 10c8-3 14-3 20-4M3 16c8-2 16-3 22-5M5 22c7-1 14-3 19-6M9 4c-1 8 0 16 3 23M15 2c-1 8 0 18 3 25M21 2c-1 7 0 15 1 21" stroke="#5e5e5e" stroke-width=".7" fill="none"/></svg><div class="lb" style="">Move Topological</div></div>
<div class="br" style="left:442px;top:3px"><div class="sp" style="left:28px;top:0px;width:30px;height:30px;background:radial-gradient(circle at 42% 34%,#d2d2d2 0,#b0b0b0 30%,#959595 62%,#626262 100%)"></div><svg class="a" style="left:28px;top:0;overflow:visible" width="30" height="30"><path d="M6 9c4-3 8 2 12-2c3-2 6 1 7 4M5 18c5-2 8 3 13 0c3-2 5-1 7 1" stroke="#d0d0d0" stroke-width="1.400" fill="none" opacity=".7"/></svg><div class="lb" style="">Clay</div></div>
<div class="br" style="left:530px;top:3px"><div class="sp" style="left:28px;top:0px;width:30px;height:30px;background:radial-gradient(circle at 42% 34%,#d2d2d2 0,#b0b0b0 30%,#959595 62%,#626262 100%)"></div><svg class="a" style="left:28px;top:0;overflow:visible" width="30" height="30"><path d="M7 20c3-8 10-13 17-13M10 24c3-7 9-11 15-12" stroke="#d4d4d4" stroke-width="1.600" fill="none" opacity=".7"/></svg><div class="lb" style="">ClayTubes</div></div>
<div class="br" style="left:618px;top:3px"><div class="sp" style="left:28px;top:0px;width:30px;height:30px;background:radial-gradient(circle at 42% 34%,#d2d2d2 0,#b0b0b0 30%,#959595 62%,#626262 100%)"></div><svg class="a" style="left:28px;top:0;overflow:visible" width="30" height="30"><path d="M6 19c4-8 11-13 18-13M9 24c4-7 9-11 16-13M4 13c3-4 7-7 12-9" stroke="#d4d4d4" stroke-width="1.500" fill="none" opacity=".7"/></svg><div class="lb" style="">ClayBuildup</div></div>
<div class="br" style="left:706px;top:3px"><div class="sp" style="left:28px;top:0px;width:30px;height:30px;background:radial-gradient(circle at 42% 34%,#d2d2d2 0,#b0b0b0 30%,#959595 62%,#626262 100%)"></div><svg class="a" style="left:28px;top:0;overflow:visible" width="30" height="30"><path d="M5 12c6-3 14-3 20 0M5 19c6-3 14-3 20 0M11 4c-2 7-2 15 0 22M20 4c2 7 2 15 0 22" stroke="#d0d0d0" stroke-width="1.200" fill="none" opacity=".6"/></svg><div class="lb" style="">Weave1</div></div>
<div class="br" style="left:794px;top:3px"><div class="sp" style="left:28px;top:0px;width:30px;height:30px;background:radial-gradient(circle at 42% 34%,#d2d2d2 0,#b0b0b0 30%,#959595 62%,#626262 100%)"></div><svg class="a" style="left:28px;top:0;overflow:visible" width="30" height="30"><ellipse cx="20" cy="10" rx="10" ry="7.500" transform="rotate(35 20 10)" fill="#d2d2d2"/></svg><div class="lb" style="">Planar</div></div>
<div class="br" style="left:882px;top:3px"><svg class="a" style="left:28px;top:0" width="30" height="30"><defs><radialGradient id="pg10" cx=".35" cy=".4" r=".8"><stop offset="0" stop-color="#c4c4c4"/><stop offset=".6" stop-color="#9a9a9a"/><stop offset="1" stop-color="#646464"/></radialGradient></defs><path d="M13 1C5 3 0 11 2 19C5 28 17 31 27 24C20 22 14 12 13 1z" fill="url(#pg10)"/><path d="M13 1C14 12 20 22 27 24C30 13 23 3 13 1z" fill="#c6c6c6"/></svg><div class="lb" style="">Polish</div></div>
<div class="br" style="left:970px;top:3px"><svg class="a" style="left:28px;top:0" width="30" height="30"><defs><radialGradient id="pg11" cx=".35" cy=".4" r=".8"><stop offset="0" stop-color="#c4c4c4"/><stop offset=".6" stop-color="#9a9a9a"/><stop offset="1" stop-color="#646464"/></radialGradient></defs><path d="M13 1C5 3 0 11 2 19C5 28 17 31 27 24C20 22 14 12 13 1z" fill="url(#pg11)"/><path d="M13 1C14 12 20 22 27 24C30 13 23 3 13 1z" fill="#c6c6c6"/></svg><div class="lb" style="">sPolish</div></div>
<div class="br" style="left:1058px;top:3px"><div class="sp" style="left:28px;top:0px;width:30px;height:30px;background:radial-gradient(circle at 42% 34%,#d2d2d2 0,#b0b0b0 30%,#959595 62%,#626262 100%)"></div><svg class="a" style="left:28px;top:0;overflow:visible" width="30" height="30"><circle cx="15" cy="15" r="9.500" fill="#bdbdbd" stroke="#cbcbcb" stroke-width=".800"/></svg><div class="lb" style="">TrimAdaptive</div></div>
<div class="br" style="left:1146px;top:3px"><div class="sp" style="left:28px;top:0px;width:30px;height:30px;background:radial-gradient(circle at 42% 34%,#d2d2d2 0,#b0b0b0 30%,#959595 62%,#626262 100%)"></div><svg class="a" style="left:28px;top:0;overflow:visible" width="30" height="30"><circle cx="15" cy="15" r="9.500" fill="#bdbdbd" stroke="#d8d8d8" stroke-width="1.200"/></svg><div class="lb" style="">TrimDynamic</div></div>
<div class="br" style="left:1234px;top:3px"><div class="sp" style="left:28px;top:0px;width:30px;height:30px;background:radial-gradient(circle at 42% 34%,#d2d2d2 0,#b0b0b0 30%,#959595 62%,#626262 100%)"></div><svg class="a" style="left:28px;top:0;overflow:visible" width="30" height="30"><path d="M9 17c-2-7 6-11 11-7c4 4 0 10-4 8c-3-1-2-5 1-5" fill="none" stroke="#d8d8d8" stroke-width="2.200" stroke-linecap="round" opacity=".85"/><path d="M10 19c-2-7 6-11 11-7" fill="none" stroke="#707070" stroke-width="1" opacity=".6"/></svg><div class="lb" style="text-align:left;padding-left:33px">Fo</div></div>
</div>
<div class="a" style="left:345px;top:1067px;width:1278px;height:13px;background:linear-gradient(#5a5a5a,#4a4a4a 30%,#4e4e4e 60%,#545454)"></div>
<div class="a" style="left:919px;top:1070px;width:50px;height:7px;background:#444 repeating-conic-gradient(#343434 0 25%,#505050 0 50%) 0 0/2px 2px"></div>
<div class="a" style="left:996px;top:1070px;width:51px;height:7px;background:#444 repeating-conic-gradient(#343434 0 25%,#505050 0 50%) 0 0/2px 2px"></div>
<svg class="a" style="left:971px;top:1070px" width="24" height="8"><path d="M1 7l5.500-5.500l5.500 5.500zM12 1h11l-5.500 5.500z" fill="#1c1c1c"/></svg>
</body></html>
